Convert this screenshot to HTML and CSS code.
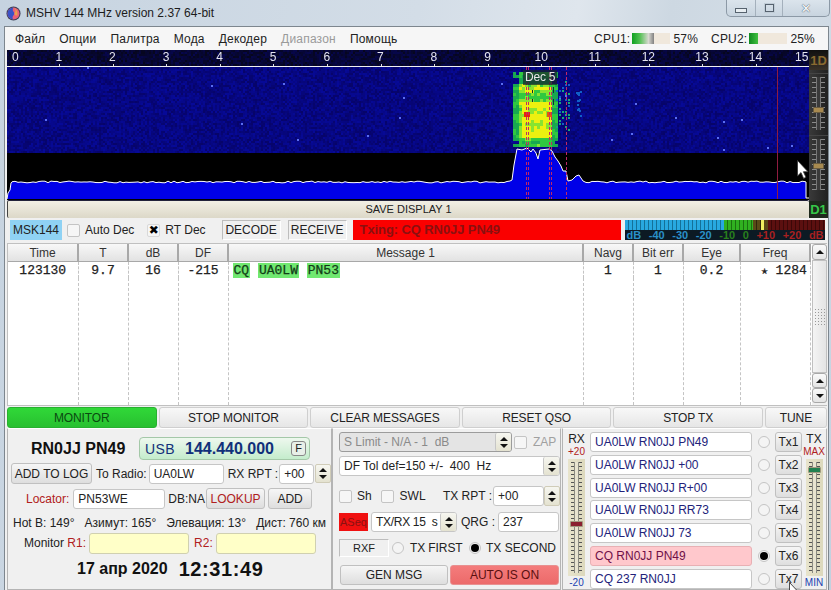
FILE: index.html
```html
<!DOCTYPE html>
<html lang="ru">

<head>
<meta charset="utf-8">
<title>MSHV 144 MHz version 2.37 64-bit</title>
<link rel="stylesheet" href="styles.css">
</head>
<body>
<div class="window">

<div class="titlebar">
  <svg class="logo" viewBox="0 0 16 16" width="15" height="15">
    <circle cx="8" cy="8" r="7.5" fill="#3a3f55"/>
    <circle cx="8" cy="8" r="6.4" fill="#e8607a"/>
    <path d="M8 1.6 A6.4 6.4 0 0 0 8 14.4 C4.5 11 11 9 8 6 C6.8 4.6 7 3 8 1.6 Z" fill="#3a52c8"/>
    <path d="M8 1.6 C10 3 11 5 9.4 7 C8.4 8.4 10 11 12 10 C13 6 11 3 8 1.6 Z" fill="#e9a04a"/>
  </svg>
  <span class="title">MSHV 144 MHz version 2.37 64-bit</span>
  <div class="win-buttons">
    <span class="win-btn win-min"><i></i></span>
    <span class="win-btn win-max"><i></i></span>
    <span class="win-btn win-close">&#10005;</span>
  </div>
</div>

<div class="client">

  <div class="menubar">
    <span>Файл</span><span>Опции</span><span>Палитра</span><span>Мода</span><span>Декодер</span><span class="disabled">Диапазон</span><span>Помощь</span>
    <div class="cpu">
      <span>CPU1:</span><div class="cpu-bar"><div class="cpu-fill cpu-fill-1"></div></div><span class="cpu-val">57%</span>
      <span class="cpu-2">CPU2:</span><div class="cpu-bar"><div class="cpu-fill cpu-fill-2"></div></div><span class="cpu-val">25%</span>
    </div>
  </div>

  <div class="display">
    <div class="display-left">
      <div class="scope">
        <canvas id="waterfall" width="802" height="150"></canvas>
        <div class="ruler">
          <span class="first">0</span><span>1</span><span>2</span><span>3</span><span>4</span><span>5</span><span>6</span><span>7</span><span>8</span><span>9</span><span>10</span><span>11</span><span>12</span><span>13</span><span>14</span><span class="last">15</span>
        </div>
        <div class="dec-label">Dec 5</div>
      </div>
      <div class="save-bar">SAVE DISPLAY 1</div>
    </div>
    <div class="display-side">
      <div class="mode-1d">1D</div>
      <div class="vslider dark slider-a"><i class="thumb thumb-a"></i></div>
      <div class="vslider dark slider-b"><i class="thumb thumb-b"></i></div>
      <div class="mode-d1">D1</div>
    </div>
  </div>

  <div class="status-row">
    <span class="msk">MSK144</span>
    <span class="check check-auto"></span><span class="lbl-auto">Auto Dec</span>
    <span class="check on check-rt"></span><span class="lbl-rt">RT Dec</span>
    <span class="flat flat-decode">DECODE</span>
    <span class="flat flat-receive">RECEIVE</span>
    <span class="txing">Txing: CQ RN0JJ PN49</span>
    <div class="meter">
      <div class="meter-bars"><i class="seg-blue"></i><i class="seg-green"></i><i class="seg-dim"></i><i class="seg-yellow"></i><i class="seg-dim2"></i><i class="seg-red"></i></div>
      <div class="meter-scale">
        <span class="c-blue">dB</span><span class="c-blue">-40</span><span class="c-blue">-30</span><span class="c-blue">-20</span><span class="c-green">-10</span><span class="c-green">0</span><span class="c-red">+10</span><span class="c-red">+20</span><span class="c-red">dB</span>
      </div>
    </div>
  </div>

  <div class="messages">
    <table class="msg-table">
      <colgroup>
        <col class="col-50"><col class="col-t"><col class="col-t"><col class="col-t"><col class="col-msg"><col class="col-t"><col class="col-t"><col class="col-eye"><col class="col-freq">
      </colgroup>
      <tr>
        <th>Time</th><th>T</th><th>dB</th><th>DF</th><th>Message 1</th><th>Navg</th><th>Bit err</th><th>Eye</th><th>Freq</th>
      </tr>
      <tr class="msg-row">
        <td>123130</td><td>9.7</td><td>16</td><td>-215</td>
        <td class="msg-text"><b>CQ</b> <b>UA0LW</b> <b>PN53</b></td>
        <td>1</td><td>1</td><td>0.2</td><td class="msg-freq"><span class="star">&#9733;</span> 1284</td>
      </tr>
      <tr class="msg-fill">
        <td></td><td></td><td></td><td></td><td></td><td></td><td></td><td></td><td></td>
      </tr>
    </table>
    <div class="scrollbar">
      <span class="sb-btn"><i class="tri-up"></i></span>
      <span class="sb-thumb"><i></i></span>
      <span class="sb-btn sb-small"><i class="tri-up"></i></span>
      <span class="sb-btn sb-small"><i class="tri-down"></i></span>
    </div>
  </div>

  <div class="actions">
    <button class="action monitor">MONITOR</button>
    <button class="action">STOP MONITOR</button>
    <button class="action">CLEAR MESSAGES</button>
    <button class="action">RESET QSO</button>
    <button class="action">STOP TX</button>
    <button class="action tune">TUNE</button>
  </div>

  <div class="panels">

    <div class="panel panel-call">
      <div class="row row-call">
        <span class="callsign">RN0JJ PN49</span>
        <div class="freq-box">
          <span class="freq-mode">USB</span><span class="freq-val">144.440.000</span><span class="freq-f">F</span>
        </div>
      </div>
      <div class="row row-radio">
        <span class="btn w-81">ADD TO LOG</span>
        <span class="lab">To Radio:</span>
        <span class="field w-75">UA0LW</span>
        <span class="lab">RX RPT :</span>
        <span class="field w-35">+00</span>
        <span class="spin"><i class="tri-up"></i><i class="tri-down"></i></span>
      </div>
      <div class="row row-loc">
        <span class="lab red">Locator:</span>
        <span class="field w-92">PN53WE</span>
        <span class="lab">DB:NA</span>
        <span class="btn w-59 red">LOOKUP</span>
        <span class="btn w-44">ADD</span>
      </div>
      <div class="row row-info">
        <span>Hot B: 149°</span><span>Азимут: 165°</span><span>Элевация: 13°</span><span>Дист: 760 км</span>
      </div>
      <div class="row row-mon">
        <span class="lab">Monitor <span class="red">R1:</span></span>
        <span class="field yellow w-100"></span>
        <span class="lab red">R2:</span>
        <span class="field yellow w-100"></span>
      </div>
      <div class="row row-clock">
        <span class="date">17 апр 2020</span>
        <span class="time">12:31:49</span>
      </div>
    </div>

    <div class="panel panel-opts">
      <div class="row row-limit">
        <span class="field off w-173"><span>S Limit - N/A - 1&nbsp; dB</span><span class="spin inset"><i class="tri-up"></i><i class="tri-down"></i></span></span>
        <span class="check check-zap"></span><span class="grey">ZAP</span>
      </div>
      <div class="row row-tol">
        <span class="field w-221"><span>DF Tol def=150 +/-&nbsp; 400&nbsp; Hz</span><span class="spin inset"><i class="tri-up"></i><i class="tri-down"></i></span></span>
      </div>
      <div class="row row-sh">
        <span class="check"></span><span class="lbl-sh">Sh</span>
        <span class="check"></span><span class="lbl-swl">SWL</span>
        <span class="lab">TX RPT :</span>
        <span class="field w-51">+00</span>
        <span class="spin wide"><i class="tri-up"></i><i class="tri-down"></i></span>
      </div>
      <div class="row row-seq">
        <span class="aseq">ASeq</span>
        <span class="field w-86"><span class="seq-text">TX/RX 15&nbsp; s</span><span class="spin inset"><i class="tri-up"></i><i class="tri-down"></i></span></span>
        <span class="lab">QRG :</span>
        <span class="field w-61">237</span>
      </div>
      <div class="row row-first">
        <span class="flat flat-rxf">RXF</span>
        <span class="radio"></span><span class="lbl-first">TX FIRST</span>
        <span class="radio on"></span><span>TX SECOND</span>
      </div>
      <div class="row row-gen">
        <span class="btn w-108">GEN MSG</span>
        <span class="btn w-109 auto-on">AUTO IS ON</span>
      </div>
    </div>

    <div class="panel panel-tx">
      <div class="level">
        <span class="level-name">RX</span>
        <span class="level-top red">+20</span>
        <div class="vslider light"><i class="thumb thumb-rx"></i></div>
        <span class="level-bottom blue">-20</span>
      </div>
      <div class="tx-rows">
        <span class="field tx-msg">UA0LW RN0JJ PN49</span><span class="radio"></span><span class="btn">Tx1</span>
        <span class="field tx-msg">UA0LW RN0JJ +00</span><span class="radio"></span><span class="btn">Tx2</span>
        <span class="field tx-msg">UA0LW RN0JJ R+00</span><span class="radio"></span><span class="btn">Tx3</span>
        <span class="field tx-msg">UA0LW RN0JJ RR73</span><span class="radio"></span><span class="btn">Tx4</span>
        <span class="field tx-msg">UA0LW RN0JJ 73</span><span class="radio"></span><span class="btn">Tx5</span>
        <span class="field tx-msg active">CQ RN0JJ PN49</span><span class="radio on"></span><span class="btn">Tx6</span>
        <span class="field tx-msg">CQ 237 RN0JJ</span><span class="radio"></span><span class="btn">Tx7</span>
      </div>
      <div class="level level-tx">
        <span class="level-name">TX</span>
        <span class="level-top red">MAX</span>
        <div class="vslider light"><i class="thumb thumb-tx"></i></div>
        <span class="level-bottom blue">MIN</span>
      </div>
    </div>

  </div>
</div>

<svg class="cursor cursor-scope" viewBox="0 0 12 19" width="12" height="19"><path d="M.5.5V16L4 12.600 6.600 18.400 9 17.300 6.400 11.700H11Z" fill="#fff" stroke="#333" stroke-width=".8"/></svg>
<svg class="cursor cursor-tx" viewBox="0 0 12 19" width="12" height="19"><path d="M.5.5V16L4 12.600 6.600 18.400 9 17.300 6.400 11.700H11Z" fill="#fff" stroke="#222" stroke-width=".8"/></svg>

</div>
<script src="waterfall.js"></script>
</body>
</html>
```

FILE: styles.css
```css
html, body {
  margin: 0;
  padding: 0;
}

body {
  width: 831px;
  height: 590px;
  overflow: hidden;
  font-family: "Liberation Sans", Arial, sans-serif;
  font-size: 12px;
  color: #222;
}

.window {
  position: relative;
  width: 831px;
  height: 590px;
  overflow: hidden;
  background: linear-gradient(100deg, #c6d3e0 0%, #d3dde7 45%, #dfe6ed 62%, #cdd8e2 72%, #d4dee7 85%, #c3d1de 100%);
}

/* title bar */
.titlebar {
  display: flex;
  align-items: center;
  height: 26px;
  padding-left: 6px;
}

.logo {
  margin-right: 5px;
}

.title {
  font-size: 12px;
  color: #1c1c1c;
}

.win-buttons {
  display: flex;
  align-self: flex-start;
  height: 16px;
  margin-left: auto;
  margin-right: 1px;
  border: 1px solid #8c99a6;
  border-top: 0;
  border-radius: 0 0 5px 5px;
  background: linear-gradient(#dbe4ec, #c8d4df);
}

.win-btn {
  display: flex;
  align-items: center;
  justify-content: center;
  height: 16px;
  color: #5a6670;
  border-right: 1px solid #a4b0bc;
}

.win-min {
  width: 28px;
}

.win-min i {
  width: 10px;
  height: 3px;
  margin-top: 5px;
  border: 1px solid #56626e;
  background: #e8eef2;
}

.win-max {
  width: 26px;
}

.win-max i {
  width: 7px;
  height: 6px;
  border: 1px solid #56626e;
  outline: 1px solid #c0ccd6;
}

.win-close {
  width: 46px;
  border-right: 0;
  font-size: 13px;
  font-family: "DejaVu Sans", sans-serif;
  color: #f4f6f8;
  text-shadow: 0 0 1px #56626e, 0 0 1px #56626e;
}

/* main client area */
.client {
  height: 564px;
  margin: 0 2px 0 4px;
  border: 1px solid #7d868e;
  border-bottom: 0;
  background: #f0f0f0;
}

.menubar {
  display: flex;
  align-items: center;
  gap: 14px;
  height: 23px;
  padding-left: 10px;
  background: #f6f6f6;
  letter-spacing: 0.2px;
}

.menubar .disabled {
  color: #9a9a9a;
}

.cpu {
  display: flex;
  align-items: center;
  margin-left: auto;
  margin-right: 13px;
}

.cpu-2 {
  margin-left: 13px;
}

.cpu-bar {
  width: 38px;
  height: 11px;
  margin: 0 3px 0 2px;
  background: #f0e8dc;
}

.cpu-fill {
  height: 100%;
}

.cpu-fill-1 {
  width: 22px;
  background: linear-gradient(90deg, #10a020, #50c050 35%, #d8d8d0 75%, #808080);
}

.cpu-fill-2 {
  width: 9px;
  background: linear-gradient(90deg, #108a20, #40c040);
}

/* waterfall and its side strip */
.display {
  display: flex;
  height: 168px;
  padding-left: 2px;
}

.display-left {
  width: 802px;
}

.scope {
  position: relative;
  height: 150px;
}

#waterfall {
  display: block;
}

.ruler {
  position: absolute;
  top: 0;
  left: 0;
  display: flex;
  width: 802px;
  height: 16px;
  font-size: 12px;
  line-height: 15px;
  color: #e4e4f0;
}

.ruler span {
  flex: 0 0 53.6px;
  text-align: center;
}

.ruler .first {
  flex-basis: 25px;
  padding-left: 5px;
  box-sizing: border-box;
  text-align: left;
}

.ruler .last {
  flex-basis: 26px;
  text-align: right;
}

.dec-label {
  position: absolute;
  top: 20px;
  left: 516px;
  padding: 0 2px;
  height: 15px;
  line-height: 15px;
  background: rgba(24, 36, 40, 0.7);
  color: #e8e8e8;
  letter-spacing: -0.2px;
  white-space: nowrap;
}

.save-bar {
  box-sizing: border-box;
  height: 18px;
  border-top: 1px solid #22223a;
  border-left: 1px solid #444;
  border-radius: 2px;
  background: linear-gradient(#f2efe4, #dcd8c8);
  font-size: 11px;
  line-height: 17px;
  text-align: center;
  color: #222;
}

.display-side {
  display: flex;
  flex-direction: column;
  align-items: center;
  width: 19px;
  background: linear-gradient(90deg, #3a3a3a, #202020);
}

.mode-1d {
  height: 20px;
  width: 100%;
  background: linear-gradient(#101010, #3a3228);
  font-size: 13px;
  font-weight: bold;
  line-height: 21px;
  text-align: center;
  color: #8a6a30;
}

.mode-d1 {
  height: 17px;
  width: 100%;
  margin-top: 8px;
  background: #1e2a1c;
  font-size: 13px;
  font-weight: bold;
  line-height: 18px;
  text-align: center;
  color: #36c848;
}

/* sliders */
.vslider {
  position: relative;
  box-sizing: border-box;
}

.vslider::before {
  content: "";
  position: absolute;
  top: 3px;
  bottom: 3px;
  left: 3px;
  right: 3px;
  background: repeating-linear-gradient(#555 0 1px, transparent 1px 4px);
}

.vslider::after {
  content: "";
  position: absolute;
  top: 3px;
  bottom: 3px;
  left: 50%;
  width: 5px;
  margin-left: -2.500px;
  background: #e8e4d0;
  border: 1px solid #8a8a80;
  border-width: 0 1px;
  box-sizing: border-box;
}

.vslider.dark {
  width: 19px;
  border-top: 1px solid #444;
}

.slider-a {
  height: 60px;
  margin-top: 3px;
}

.slider-b {
  height: 58px;
  margin-top: 2px;
}

.vslider.dark::before {
  background: repeating-linear-gradient(#8a8a8a 0 1px, transparent 1px 5px);
}

.vslider.dark::after {
  background: #3a3a3a;
  border-color: #777;
}

.vslider.light {
  width: 17px;
  height: 119px;
  background: linear-gradient(90deg, #e8e4cc, #dcd8bc);
}

.thumb {
  position: absolute;
  z-index: 1;
  left: 3px;
  width: 11px;
  height: 6px;
  box-sizing: border-box;
  border: 1px solid #a09a80;
  border-radius: 1px;
}

.thumb-a {
  top: 33px;
  background: #a88a50;
  border-color: #6a5c40;
  left: 4px;
}

.thumb-b {
  top: 27px;
  background: #a88a50;
  border-color: #6a5c40;
  left: 4px;
}

.thumb-rx {
  top: 62px;
  left: 2px;
  width: 13px;
  background: #8a2030;
}

.thumb-tx {
  top: 8px;
  left: 2px;
  width: 13px;
  background: #208050;
}

/* decode status row */
.status-row {
  display: flex;
  align-items: center;
  height: 23px;
  padding-left: 5px;
  padding-top: 1px;
  box-sizing: border-box;
}

.msk {
  width: 52px;
  height: 20px;
  line-height: 20px;
  background: #8fd2f4;
  text-align: center;
}

.check {
  display: inline-block;
  flex: none;
  box-sizing: border-box;
  width: 13px;
  height: 13px;
  border: 1px solid #c4c4c4;
  border-radius: 2px;
  background: #f6f6f6;
}

.check.on {
  border-color: #d8d8d8;
  font-family: "DejaVu Sans", sans-serif;
  font-size: 12px;
  line-height: 11px;
  text-align: center;
  color: #000;
}

.check.on::after {
  content: "\2716";
}

.check-auto {
  margin-left: 5px;
}

.lbl-auto {
  margin-left: 5px;
}

.check-rt {
  margin-left: 13px;
}

.lbl-rt {
  margin-left: 5px;
}

.flat {
  box-sizing: border-box;
  height: 20px;
  line-height: 19px;
  border: 1px solid;
  border-color: #bdbdbd #fff #fff #bdbdbd;
  text-align: center;
}

.flat-decode {
  width: 59px;
  margin-left: 16px;
}

.flat-receive {
  width: 59px;
  margin-left: 7px;
}

.txing {
  box-sizing: border-box;
  width: 268px;
  height: 20px;
  margin-left: 6px;
  padding-left: 7px;
  background: #fa0000;
  font-size: 13px;
  font-weight: bold;
  line-height: 20px;
  letter-spacing: -0.1px;
  color: #8a1010;
}

.meter {
  width: 200px;
  height: 20px;
  margin-left: 4px;
  background: #0c1a24;
}

.meter-bars {
  display: flex;
  height: 10px;
}

.meter-bars i {
  height: 10px;
}

.seg-blue {
  width: 99px;
  background: repeating-linear-gradient(90deg, #28a8e0 0 3px, #147098 3px 4px);
}

.seg-green {
  width: 29px;
  background: repeating-linear-gradient(90deg, #30b020 0 3px, #1a7010 3px 4px);
}

.seg-dim {
  width: 8px;
  background: repeating-linear-gradient(90deg, #5a4a18 0 3px, #30280c 3px 4px);
}

.seg-yellow {
  width: 3px;
  background: #f0f060;
}

.seg-dim2 {
  width: 4px;
  background: #5a4a18;
}

.seg-red {
  width: 57px;
  background: repeating-linear-gradient(90deg, #5c1010 0 3px, #3c0808 3px 4px);
}

.meter-scale {
  display: flex;
  justify-content: space-between;
  padding: 0 1px 0 2px;
  height: 10px;
  font-size: 11px;
  font-weight: bold;
  line-height: 10px;
}

.c-blue {
  color: #2a90c8;
}

.c-green {
  color: #28801c;
}

.c-red {
  color: #a82020;
}

/* decoded messages table */
.messages {
  display: flex;
  height: 163px;
  margin: 2px 0 0 2px;
  background: #fff;
  border: 1px solid #c0c0c0;
  border-right: 0;
  box-sizing: border-box;
  width: 820px;
}

.msg-table {
  table-layout: fixed;
  width: 802px;
  height: 161px;
  border-collapse: collapse;
}

.col-50 {
  width: 70px;
}

.col-t {
  width: 50px;
}

.col-msg {
  width: 355px;
}

.col-eye {
  width: 57px;
}

.col-freq {
  width: 70px;
}

.msg-table th {
  height: 17px;
  padding: 0;
  border-right: 2px solid #a8a8a8;
  border-bottom: 1px solid #a8a8a8;
  background: linear-gradient(#f8f8f8, #e2e2e2);
  font-size: 12px;
  font-weight: normal;
  color: #333;
}

.msg-table td {
  padding: 0;
  border-right: 1px dashed #c4c4c4;
  text-align: center;
  font-family: "Liberation Mono", monospace;
  font-size: 13px;
  color: #222;
  -webkit-text-stroke: 0.25px #222;
}

.msg-row td {
  height: 16px;
  vertical-align: middle;
}

.msg-table td.msg-text {
  padding-left: 4px;
  text-align: left;
}

.msg-text b {
  padding: 0 1px;
  background: #70e870;
  font-weight: normal;
  color: #0a4a10;
}

.msg-table td.msg-freq {
  padding-left: 18px;
}

.star {
  font-size: 11px;
}

.scrollbar {
  display: flex;
  flex-direction: column;
  width: 17px;
  margin-left: 1px;
  background: #f0f0f0;
}

.sb-btn {
  display: flex;
  align-items: center;
  justify-content: center;
  box-sizing: border-box;
  height: 16px;
  border: 1px solid #a8a8a8;
  border-radius: 3px;
  background: linear-gradient(#fafafa, #e4e4e4);
}

.sb-small {
  height: 15px;
}

.sb-thumb {
  display: flex;
  align-items: center;
  justify-content: center;
  box-sizing: border-box;
  height: 113px;
  border: 1px solid #c0c0c0;
  background: linear-gradient(90deg, #f4f4f4, #e4e4e4);
}

.sb-thumb i {
  width: 11px;
  height: 18px;
  background: radial-gradient(circle, #999 0.7px, transparent 1px) 0 0 / 3px 3px;
}

.tri-up,
.tri-down {
  display: block;
  width: 0;
  height: 0;
  border-left: 4px solid transparent;
  border-right: 4px solid transparent;
}

.tri-up {
  border-bottom: 4px solid #111;
}

.tri-down {
  border-top: 4px solid #111;
}

/* big action buttons */
.actions {
  display: flex;
  gap: 2px;
  height: 21px;
  margin: 1px 0 0 2px;
}

.action {
  width: 149.6px;
  padding: 0;
  border: 1px solid #cfcfcf;
  border-radius: 3px;
  background: linear-gradient(#f8f8f8, #e6e6e6);
  font-family: inherit;
  font-size: 12px;
  letter-spacing: -0.1px;
  color: #222;
}

.action.monitor {
  background: linear-gradient(#30d838, #28c030);
  border-color: #28b030;
  color: #0a4a10;
}

.action.tune {
  width: 62px;
}

/* bottom panels */
.panels {
  display: flex;
  height: 162px;
}

.panel {
  box-sizing: border-box;
  border: 1px solid #b4b4b4;
  border-top-color: #fff;
  margin-left: 1px;
}

.panel-call {
  width: 325px;
  margin-left: 2px;
}

.panel-opts {
  width: 229px;
  margin-left: 0;
  padding-left: 6px;
}

.panel-tx {
  display: flex;
  width: 265px;
  margin-left: 1px;
}

.row {
  display: flex;
  align-items: center;
}

.lab {
  flex: none;
  white-space: nowrap;
}

.red {
  color: #b02020;
}

.blue {
  color: #2040b0;
}

.grey {
  color: #a0a0a0;
}

.field {
  display: flex;
  align-items: center;
  justify-content: space-between;
  flex: none;
  box-sizing: border-box;
  height: 20px;
  padding-left: 4px;
  border: 1px solid #c6c6c6;
  border-radius: 3px;
  background: #fff;
  white-space: nowrap;
}

.field.yellow {
  background: #ffffc8;
  border-color: #d0d0b0;
}

.field.off {
  background: #e4e4e4;
  border-color: #9c9c9c;
  color: #8a8a8a;
}

.btn {
  display: flex;
  align-items: center;
  justify-content: center;
  flex: none;
  box-sizing: border-box;
  height: 21px;
  border: 1px solid #c0c0c0;
  border-radius: 3px;
  background: linear-gradient(#f6f6f6, #dedede);
  white-space: nowrap;
}

.spin {
  display: flex;
  flex-direction: column;
  align-items: center;
  justify-content: space-around;
  flex: none;
  box-sizing: border-box;
  width: 16px;
  height: 20px;
  padding: 2px 0;
  border: 1px solid #d0ccb8;
  border-radius: 2px;
  background: linear-gradient(#f6f6f0, #e4e2d0);
}

.spin.inset {
  border: 0;
  border-left: 1px solid #c6c6c6;
  height: 18px;
}

.radio {
  display: flex;
  align-items: center;
  justify-content: center;
  flex: none;
  box-sizing: border-box;
  width: 12px;
  height: 12px;
  border: 1px solid #c4c4c4;
  border-radius: 50%;
  background: #f4f4f4;
}

.radio.on::after {
  content: "";
  width: 8px;
  height: 8px;
  border-radius: 50%;
  background: #000;
}

.w-35 { width: 35px; }
.w-44 { width: 44px; }
.w-51 { width: 51px; }
.w-59 { width: 59px; }
.w-61 { width: 61px; }
.w-75 { width: 75px; }
.w-81 { width: 81px; }
.w-86 { width: 86px; }
.w-92 { width: 92px; }
.w-100 { width: 100px; }
.w-108 { width: 108px; }
.w-109 { width: 109px; }
.w-173 { width: 173px; }
.w-221 { width: 221px; }

/* callsign panel */
.row-call {
  height: 23px;
  margin-top: 8px;
  padding-left: 23px;
}

.callsign {
  width: 108px;
  font-size: 16px;
  font-weight: bold;
  color: #111;
}

.freq-box {
  display: flex;
  align-items: center;
  box-sizing: border-box;
  width: 171px;
  height: 23px;
  padding-left: 5px;
  border: 1px solid #a4c8a8;
  border-radius: 4px;
  background: linear-gradient(#eef8ee, #c4eccc);
}

.freq-mode {
  width: 40px;
  font-size: 14px;
  letter-spacing: 0.4px;
  color: #14307a;
}

.freq-val {
  width: 106px;
  font-size: 16px;
  font-weight: bold;
  color: #10307a;
}

.freq-f {
  box-sizing: border-box;
  width: 15px;
  height: 15px;
  border: 1px solid #888;
  border-radius: 3px;
  background: #e8efe8;
  font-size: 11px;
  line-height: 13px;
  text-align: center;
}

.row-radio {
  gap: 3px;
  height: 21px;
  margin-top: 3px;
  padding-left: 3px;
}

.row-radio .lab:nth-child(2) {
  margin-left: 1px;
  margin-right: -1px;
}

.row-radio .lab:nth-child(4) {
  margin-left: 1px;
  margin-right: -2px;
}

.row-radio .spin {
  margin-left: -2px;
  height: 19px;
}

.row-loc {
  gap: 2px;
  height: 21px;
  margin-top: 4px;
  padding-left: 18px;
}

.row-loc .field {
  margin-left: 2px;
}

.row-loc .lab:nth-child(3) {
  margin: 0 -1px 0 1px;
}

.row-loc .btn:last-child {
  margin-left: 1px;
}

.row-info {
  justify-content: space-between;
  height: 14px;
  margin-top: 7px;
  padding: 0 5px 0 5px;
  white-space: nowrap;
}

.row-mon {
  gap: 3px;
  height: 20px;
  margin-top: 3px;
  padding-left: 16px;
}

.row-mon .field {
  height: 21px;
}

.row-mon .lab:nth-child(3) {
  margin-left: 2px;
}

.row-clock {
  gap: 11px;
  height: 24px;
  margin-top: 4px;
  padding-left: 69px;
}

.date {
  font-size: 16px;
  font-weight: bold;
  color: #111;
}

.time {
  font-size: 20px;
  font-weight: bold;
  letter-spacing: 0.6px;
  color: #111;
}

/* options panel */
.row-limit {
  gap: 2px;
  height: 20px;
  margin-top: 3px;
}

.check-zap {
  margin-right: 4px;
}

.row-tol {
  height: 20px;
  margin-top: 4px;
}

.row-sh {
  height: 20px;
  margin-top: 10px;
}

.lbl-sh {
  width: 24px;
  padding-left: 5px;
}

.lbl-swl {
  width: 44px;
  padding-left: 6px;
}

.row-sh .lab {
  margin-right: 1px;
}

.row-seq {
  gap: 4px;
  height: 20px;
  margin-top: 6px;
}

.aseq {
  width: 29px;
  height: 18px;
  margin-right: -1px;
  background: #f01010;
  font-size: 11px;
  line-height: 18px;
  text-align: center;
  color: #8a1010;
}

.seq-text {
  letter-spacing: -0.3px;
}

.row-seq .lab {
  margin-right: -1px;
}

.row-first {
  height: 18px;
  margin-top: 7px;
}

.flat-rxf {
  width: 50px;
  height: 18px;
  margin-right: 3px;
  line-height: 17px;
  font-size: 11px;
}

.lbl-first {
  width: 59px;
  padding-left: 6px;
  letter-spacing: -0.1px;
}

.row-first .radio.on {
  margin-right: 5px;
}

.row-gen {
  gap: 2px;
  height: 20px;
  margin-top: 8px;
  padding-left: 1px;
}

.row-gen .btn {
  height: 20px;
}

.auto-on {
  background: linear-gradient(#f47c7c, #ec6a6a);
  border-color: #e89090;
  color: #5a1010;
}

/* tx message panel */
.level {
  display: flex;
  flex-direction: column;
  align-items: center;
  flex: none;
  width: 27px;
  box-sizing: border-box;
}

.level-tx {
  width: 24px;
}

.level-name {
  height: 14px;
  margin-top: 3px;
  line-height: 14px;
}

.level-top,
.level-bottom {
  height: 12px;
  font-size: 10px;
  line-height: 12px;
}

.level-top {
  margin-bottom: 1px;
}

.level-bottom {
  margin-top: 1px;
}

.tx-rows {
  display: grid;
  grid-template-columns: 162px 23px 27px;
  grid-auto-rows: 20px;
  gap: 2.8px 0;
  align-items: center;
  justify-items: center;
  margin-top: 3px;
}

.tx-rows .btn {
  width: 27px;
  height: 20px;
}

.tx-msg {
  width: 162px;
  color: #22227a;
}

.tx-msg.active {
  background: #ffc8cc;
  border-color: #e8b0b4;
  color: #701048;
}

.cursor {
  position: absolute;
}

.cursor-scope {
  left: 797px;
  top: 160px;
}

.cursor-tx {
  left: 789px;
  top: 582px;
}
```

FILE: waterfall.js
```js
// Draw the waterfall and the spectrum on the canvas
var canvas = document.getElementById("waterfall");
var ctx = canvas.getContext("2d");

// Small seeded generator so the noise is the same on every load
var seed = 12345;
function rnd() {
  seed = (seed * 16807) % 2147483647;
  return seed / 2147483647;
}

function cell(x, y, w, h, color) {
  ctx.fillStyle = color;
  ctx.fillRect(x, y, w, h);
}

// Canvas starts at x=7, y=50 of the window
var OX = 7;
var OY = 50;

// Background
cell(0, 0, 802, 150, "#000");

// Ruler band
for (var y = 0; y < 16; y += 2) {
  for (var x = 0; x < 802; x += 2) {
    cell(x, y, 2, 2, "rgb(6,6," + Math.floor(28 + rnd() * 50) + ")");
  }
}

// Noise floor of the waterfall
for (var y2 = 17; y2 < 103; y2 += 2) {
  for (var x2 = 0; x2 < 802; x2 += 2) {
    var v = rnd();
    var b = Math.floor(105 + v * 48);
    var g = Math.floor(4 + v * 6);
    var r = 6;
    if (v > 0.9985) {
      r = 90;
      g = 110;
      b = 240;
    }
    cell(x2, y2, 2, 2, "rgb(" + r + "," + g + "," + b + ")");
  }
}

// Colour map of the signal
function heat(i) {
  if (i < 0.42) return "#18a850";
  if (i < 0.6) return "#30c840";
  if (i < 0.76) return "#88e430";
  return "#ecf010";
}

// The decoded signal, in window coordinates
for (var sy = 72; sy < 146; sy += 3) {
  var band = Math.abs(((sy - 72) % 15) - 7.5) / 7.5;
  for (var sx = 513; sx < 556; sx += 3) {
    var edge = 1;
    if (sx < 519 || sx > 549) edge = 0.62;
    if (sy < 82) edge = edge * 0.6;
    if (sy > 138) edge = edge * 0.75;
    var i = (0.36 + 0.3 * band + 0.28 * rnd()) * edge;
    // yellow core between the two tone markers
    if (sx > 519 && sx < 552 && sy > 100 && sy < 138) i += 0.2;
    if (i < 0.26) continue;
    cell(sx - OX, sy - OY, 3, 3, heat(i));
    if (sx > 528 && sy > 84 && sy < 104 && rnd() < 0.1) {
      cell(sx - OX + 1, sy - OY, 1, 3, "#0c3038");
    }
  }
  // weak dotted tail to the right of the signal
  for (var tx = 556; tx < 571; tx += 3) {
    if (rnd() < 0.42 && sy > 78 && sy < 130) {
      cell(tx - OX, sy - OY, 2, 2, rnd() < 0.5 ? "#18a878" : "#1060c8");
    }
  }
}

// Hot spots
cell(524 - OX, 112 - OY, 6, 5, "#e82010");
cell(547 - OX, 112 - OY, 5, 5, "#e85010");

// Few weak dots right of the signal
for (var d = 0; d < 14; d++) {
  cell(576 + Math.floor(rnd() * 6) - OX, 88 + Math.floor(rnd() * 28) - OY, 2, 2, "#1060c8");
}

// Soften it a little, the reference is a compressed picture
ctx.filter = "blur(0.7px)";
ctx.drawImage(canvas, 0, 0);
ctx.filter = "none";
cell(0, 103, 802, 47, "#000");

// Ruler line and ticks
cell(0, 16, 802, 1, "#f0f0f0");
for (var n = 1; n < 15; n++) {
  cell(Math.round(52 + (n - 1) * 53.6), 14, 1, 2, "#e0e0e0");
}

// Spectrum points, window coordinates, straight parts are filled with jitter
var peak = [
  [510, 181], [512, 180], [514, 165], [517, 149], [522, 150], [527, 148],
  [531, 152], [533, 149], [536, 153], [538, 159], [540, 150], [549, 149],
  [552, 151], [555, 157], [558, 161], [561, 166], [563, 171], [566, 171],
  [568, 181], [572, 180], [576, 176], [579, 175], [583, 181]
];
var points = [[7, 199], [8, 193], [10, 190], [11, 183]];
for (var px = 12; px < 510; px += 3) {
  points.push([px, 182 + (rnd() - 0.5) * 1.8]);
}
points = points.concat(peak);
for (var qx = 586; qx < 806; qx += 3) {
  points.push([qx, 182 + (rnd() - 0.5) * 1.8]);
}
points.push([806, 182]);
points.push([806, 198]);
points.push([809, 198]);

ctx.beginPath();
ctx.moveTo(points[0][0] - OX, points[0][1] - OY);
for (var k = 1; k < points.length - 1; k++) {
  ctx.lineTo(points[k][0] - OX, points[k][1] - OY);
}
ctx.lineTo(806 - OX, 149);
ctx.lineTo(0, 149);
ctx.closePath();
ctx.fillStyle = "#0000e8";
ctx.fill();

ctx.beginPath();
ctx.moveTo(points[0][0] - OX, points[0][1] - OY);
for (var m = 1; m < points.length; m++) {
  ctx.lineTo(points[m][0] - OX, points[m][1] - OY);
}
ctx.strokeStyle = "#fff";
ctx.lineWidth = 1;
ctx.stroke();

// Tone markers
ctx.strokeStyle = "#c02868";
ctx.setLineDash([3, 2]);
var markers = [526.5, 528.5, 549.5, 551.5, 566.5];
for (var t = 0; t < markers.length; t++) {
  ctx.beginPath();
  ctx.moveTo(markers[t] - OX, 17);
  ctx.lineTo(markers[t] - OX, 149);
  ctx.stroke();
}
ctx.setLineDash([]);
ctx.strokeStyle = "#901c40";
ctx.beginPath();
ctx.moveTo(777.5 - OX, 17);
ctx.lineTo(777.5 - OX, 149);
ctx.stroke();
```
